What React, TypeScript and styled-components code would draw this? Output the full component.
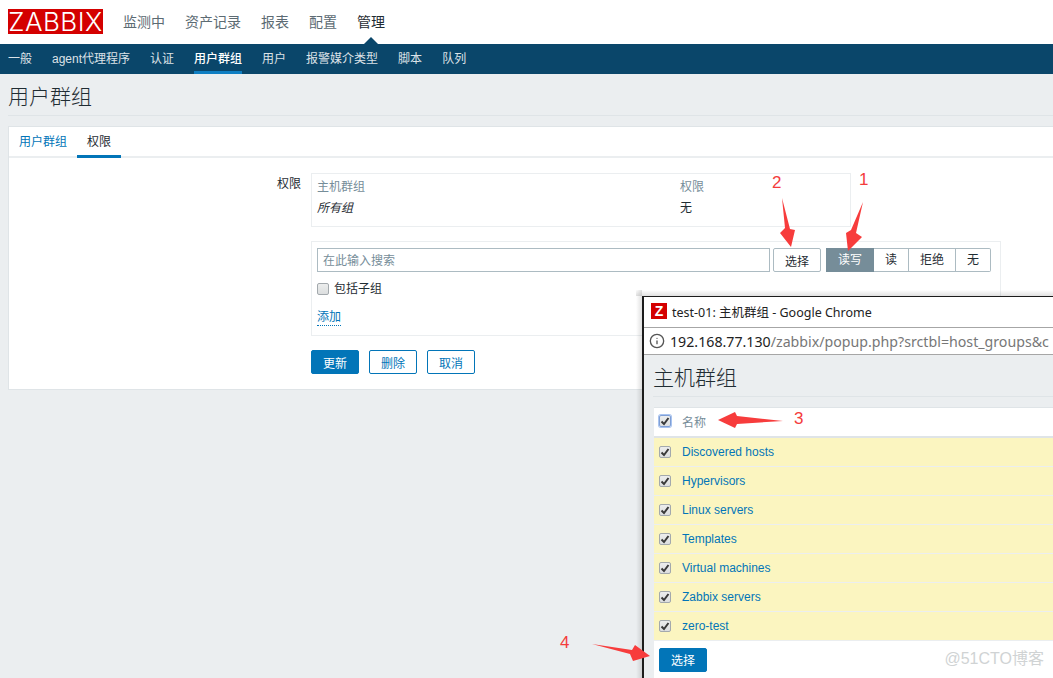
import React from 'react'
import styled, { createGlobalStyle } from 'styled-components'
import { Info } from 'lucide-react'

const GlobalStyle = createGlobalStyle`
  html, body {
    margin: 0;
    padding: 0;
    background: #ebeef0;
  }
  * {
    box-sizing: border-box;
  }
  body {
    font-family: 'Liberation Sans', 'Noto Sans CJK SC', sans-serif;
    font-size: 12px;
    color: #1f2c33;
  }
`

const Page = styled.div`
  position: relative;
  width: 1053px;
  height: 678px;
  overflow: hidden;
  background: #ebeef0;
`
const Header = styled.div`
  display: flex;
  align-items: center;
  height: 44px;
  padding: 0 8px 1px;
  background: #fff;
`
const Logo = styled.div`
  display: flex;
  align-items: center;
  justify-content: center;
  width: 95px;
  height: 25px;
  margin-right: 20px;
  background: #d40000;
  color: #fff;
  font-family: 'Inter', sans-serif;
  font-size: 26px;
  font-weight: 300;
  letter-spacing: 0.5px;
  line-height: 25px;
`
const MainNav = styled.nav`
  display: flex;
  gap: 20px;
`
const MainItem = styled.span<{ $active?: boolean }>`
  position: relative;
  font-size: 14px;
  line-height: 20px;
  color: ${props => (props.$active ? '#1f2c33' : '#5c6b73')};
  ${props =>
    props.$active &&
    `
    &::after {
      content: '';
      position: absolute;
      left: 50%;
      bottom: -13px;
      margin-left: -8px;
      border-left: 8px solid transparent;
      border-right: 8px solid transparent;
      border-bottom: 8px solid #0a466a;
    }
  `}
`
const SubNav = styled.nav`
  display: flex;
  gap: 20px;
  height: 30px;
  padding: 0 8px;
  background: #0a466a;
`
const SubItem = styled.span<{ $active?: boolean }>`
  height: 30px;
  line-height: 30px;
  color: #fff;
  font-weight: ${props => (props.$active ? 500 : 400)};
  opacity: ${props => (props.$active ? 1 : 0.85)};
  border-bottom: 3px solid ${props => (props.$active ? '#0f7ec2' : 'transparent')};
`
const Content = styled.div`
  padding: 0 0 0 8px;
`
const Title = styled.h1`
  margin: 0 0 10px;
  height: 42px;
  padding-top: 9px;
  font-size: 21px;
  font-weight: 300;
  line-height: 27px;
  color: #1f2c33;
  border-bottom: 1px solid #dfe4e7;
`
const Card = styled.div`
  height: 264px;
  background: #fff;
  border: 1px solid #dfe4e7;
  border-right: none;
`
const Tabs = styled.div`
  display: flex;
  height: 31px;
  border-bottom: 2px solid #ebeef0;
`
const Tab = styled.span<{ $active?: boolean }>`
  height: 31px;
  padding: 0 10px;
  line-height: 31px;
  color: ${props => (props.$active ? '#1f2c33' : '#0275b8')};
  border-bottom: 3px solid ${props => (props.$active ? '#0275b8' : 'transparent')};
`
const FormRow = styled.div`
  display: grid;
  grid-template-columns: 292px 1fr;
  column-gap: 10px;
  padding-top: 15px;
`
const FormLabel = styled.label`
  padding-top: 3px;
  text-align: right;
  line-height: 16px;
`
const FormBody = styled.div`
  display: flex;
  flex-direction: column;
`
const PermTable = styled.div`
  display: grid;
  grid-template-columns: 363px 1fr;
  grid-auto-rows: 21px;
  align-items: center;
  width: 540px;
  height: 54px;
  padding: 1px 5px;
  margin-bottom: 14px;
  border: 1px solid #ebeef0;
`
const HeadCell = styled.span`
  color: #768d99;
`
const ItalicCell = styled.span`
  font-style: italic;
`
const AddBox = styled.div`
  width: 690px;
  height: 95px;
  padding: 6px 5px;
  border: 1px solid #ebeef0;
`
const SearchRow = styled.div`
  display: flex;
  height: 24px;
`
const SearchInput = styled.div`
  width: 453px;
  height: 24px;
  padding-left: 5px;
  border: 1px solid #acbbc2;
  color: #768d99;
  line-height: 24px;
`
const SelectButton = styled.button`
  width: 48px;
  height: 24px;
  margin-left: 3px;
  padding: 0;
  background: #fff;
  border: 1px solid #acbbc2;
  border-radius: 2px;
  font: inherit;
  color: #1f2c33;
`
const Segments = styled.div`
  display: flex;
  margin-left: 5px;
`
const Segment = styled.span<{ $width: number; $on?: boolean }>`
  width: ${props => props.$width}px;
  height: 24px;
  text-align: center;
  line-height: 23px;
  color: ${props => (props.$on ? '#fff' : '#1f2c33')};
  background: ${props => (props.$on ? '#768d99' : '#fff')};
  border: 1px solid ${props => (props.$on ? '#768d99' : '#acbbc2')};
  border-left-width: ${props => (props.$on ? 1 : 0)}px;
  &:last-child {
    border-radius: 0 2px 2px 0;
  }
`
const CheckRow = styled.div`
  display: flex;
  align-items: center;
  gap: 5px;
  margin-top: 11px;
  height: 12px;
  line-height: 12px;
`
const CheckBox = styled.span<{ $focus?: boolean }>`
  display: inline-flex;
  align-items: center;
  justify-content: center;
  flex: none;
  width: 12px;
  height: 12px;
  margin-top: -1px;
  background: linear-gradient(#eceded, #dcdedf);
  border: 1px solid ${props => (props.$focus ? '#7f9fd6' : '#a3a9ad')};
  border-radius: 2px;
  box-shadow: ${props => (props.$focus ? '0 0 0 1px #a9c4f0' : 'none')};
  color: #3a3a3a;
`
const AddLink = styled.a`
  display: inline-block;
  margin-top: 15px;
  color: #0275b8;
  line-height: 15px;
  border-bottom: 1px dotted #0275b8;
`
const Actions = styled.div`
  display: flex;
  gap: 10px;
  margin-top: 14px;
`
const ActionButton = styled.button<{ $primary?: boolean }>`
  width: 48px;
  height: 24px;
  padding: 0;
  border: 1px solid #0275b8;
  border-radius: 2px;
  font: inherit;
  background: ${props => (props.$primary ? '#0275b8' : '#fff')};
  color: ${props => (props.$primary ? '#fff' : '#0275b8')};
`
const Popup = styled.div`
  position: absolute;
  left: 642px;
  top: 296px;
  width: 411px;
  height: 382px;
  overflow: hidden;
  background: #ebeef0;
  border-style: solid;
  border-color: #1c1c1c;
  border-width: 1px 0 0 2px;
`
const PopupShadow = styled.div`
  position: absolute;
  left: 636px;
  top: 290px;
  width: 417px;
  height: 388px;
  background: linear-gradient(to bottom, transparent, rgba(0, 0, 0, 0.12) 100%) top / 100% 6px no-repeat,
    linear-gradient(to right, transparent, rgba(0, 0, 0, 0.12) 100%) left / 6px 100% no-repeat;
`
const WindowTitle = styled.div`
  display: flex;
  align-items: center;
  gap: 5px;
  height: 31px;
  padding: 0 0 2px 7px;
  background: #fff;
  border-bottom: 1px solid #a6a6a6;
  font-family: 'Noto Sans', 'Noto Sans CJK SC', sans-serif;
  font-size: 12.5px;
  color: #222;
`
const Favicon = styled.span`
  display: flex;
  align-items: center;
  justify-content: center;
  width: 16px;
  height: 16px;
  background: #d40000;
  color: #fff;
  font-family: 'Liberation Sans', sans-serif;
  font-size: 14px;
  font-weight: 700;
`
const UrlBar = styled.div`
  display: flex;
  align-items: center;
  gap: 5px;
  height: 27px;
  padding-left: 5px;
  background: #fff;
  border-bottom: 1px solid #a6a6a6;
  font-family: 'Noto Sans', sans-serif;
  font-size: 14.2px;
  white-space: nowrap;
  color: #222;
`
const InfoIcon = styled(Info)`
  flex: none;
`
const UrlRest = styled.span`
  color: #777;
`
const PopupBody = styled.div`
  padding: 0 0 0 10px;
`
const PopupTitle = styled.h2`
  margin: 0 0 10px -1px;
  height: 42px;
  padding: 9px 0 0 0;
  font-size: 21px;
  font-weight: 300;
  line-height: 27px;
  color: #1f2c33;
  border-bottom: 1px solid #dfe4e7;
`
const ListHead = styled.div`
  display: flex;
  align-items: center;
  gap: 11px;
  height: 31px;
  padding: 0 0 1px 5px;
  background: #fff;
  color: #768d99;
  border-top: 1px solid #dfe4e7;
  border-bottom: 2px solid #dfe4e7;
`
const ListRow = styled.div`
  display: flex;
  align-items: center;
  gap: 11px;
  height: 29px;
  padding-left: 5px;
  background: #fbf5c0;
  border-bottom: 1px solid #ebeef0;
  color: #0275b8;
`
const ListFooter = styled.div`
  display: flex;
  align-items: center;
  height: 37px;
  padding-left: 5px;
  background: #fff;
`
const Overlay = styled.svg`
  position: absolute;
  left: 0;
  top: 0;
  pointer-events: none;
`
const Marker = styled.span<{ $x: number; $y: number }>`
  position: absolute;
  left: ${props => props.$x}px;
  top: ${props => props.$y}px;
  font-size: 17px;
  line-height: 20px;
  color: #f43c3c;
`
const Watermark = styled.span`
  position: absolute;
  right: 9px;
  bottom: 9px;
  font-size: 16px;
  line-height: 20px;
  color: #d0d3d4;
`

const mainItems = ['监测中', '资产记录', '报表', '配置']
const subItems = ['一般', 'agent代理程序', '认证', '用户群组', '用户', '报警媒介类型', '脚本', '队列']
const hostGroups = [
  'Discovered hosts',
  'Hypervisors',
  'Linux servers',
  'Templates',
  'Virtual machines',
  'Zabbix servers',
  'zero-test'
]
const arrows = [
  '863,202 856,233 862,237 848,251 846,233 851,230',
  '782,198 790,229 795,230 791,247 780,233 785,228',
  '783,421 737,424 735,428 718,420 735,412 737,416',
  '592,644 632,650 635,645 650,656 633,661 630,654'
]

const Check = () => (
  <svg width='10' height='10' viewBox='0 0 10 10'>
    <path d='M1.5 5.5 L4 8 L8.5 2' fill='none' stroke='currentColor' strokeWidth='2' />
  </svg>
)

const App = () => (
  <Page>
    <GlobalStyle />
    <Header>
      <Logo>ZABBIX</Logo>
      <MainNav>
        {mainItems.map(item => (
          <MainItem key={item}>{item}</MainItem>
        ))}
        <MainItem $active>管理</MainItem>
      </MainNav>
    </Header>
    <SubNav>
      {subItems.map(item => (
        <SubItem key={item} $active={item === '用户群组'}>
          {item}
        </SubItem>
      ))}
    </SubNav>
    <Content>
      <Title>用户群组</Title>
      <Card>
        <Tabs>
          <Tab>用户群组</Tab>
          <Tab $active>权限</Tab>
        </Tabs>
        <FormRow>
          <FormLabel>权限</FormLabel>
          <FormBody>
            <PermTable>
              <HeadCell>主机群组</HeadCell>
              <HeadCell>权限</HeadCell>
              <ItalicCell>所有组</ItalicCell>
              <span>无</span>
            </PermTable>
            <AddBox>
              <SearchRow>
                <SearchInput>在此输入搜索</SearchInput>
                <SelectButton>选择</SelectButton>
                <Segments>
                  <Segment $width={48} $on>读写</Segment>
                  <Segment $width={35}>读</Segment>
                  <Segment $width={47}>拒绝</Segment>
                  <Segment $width={35}>无</Segment>
                </Segments>
              </SearchRow>
              <CheckRow>
                <CheckBox />
                包括子组
              </CheckRow>
              <AddLink>添加</AddLink>
            </AddBox>
            <Actions>
              <ActionButton $primary>更新</ActionButton>
              <ActionButton>删除</ActionButton>
              <ActionButton>取消</ActionButton>
            </Actions>
          </FormBody>
        </FormRow>
      </Card>
    </Content>
    <PopupShadow />
    <Popup>
      <WindowTitle>
        <Favicon>Z</Favicon>
        test-01: 主机群组 - Google Chrome
      </WindowTitle>
      <UrlBar>
        <InfoIcon size={16} color='#555' />
        <span>
          192.168.77.130<UrlRest>/zabbix/popup.php?srctbl=host_groups&amp;c</UrlRest>
        </span>
      </UrlBar>
      <PopupBody>
        <PopupTitle>主机群组</PopupTitle>
        <ListHead>
          <CheckBox $focus>
            <Check />
          </CheckBox>
          名称
        </ListHead>
        {hostGroups.map(group => (
          <ListRow key={group}>
            <CheckBox>
              <Check />
            </CheckBox>
            {group}
          </ListRow>
        ))}
        <ListFooter>
          <ActionButton $primary>选择</ActionButton>
        </ListFooter>
      </PopupBody>
    </Popup>
    <Overlay width='1053' height='678'>
      {arrows.map(points => (
        <polygon key={points} points={points} fill='#f73c3c' />
      ))}
    </Overlay>
    <Marker $x={859} $y={170}>1</Marker>
    <Marker $x={772} $y={173}>2</Marker>
    <Marker $x={794} $y={409}>3</Marker>
    <Marker $x={560} $y={633}>4</Marker>
    <Watermark>@51CTO博客</Watermark>
  </Page>
)

export default App
